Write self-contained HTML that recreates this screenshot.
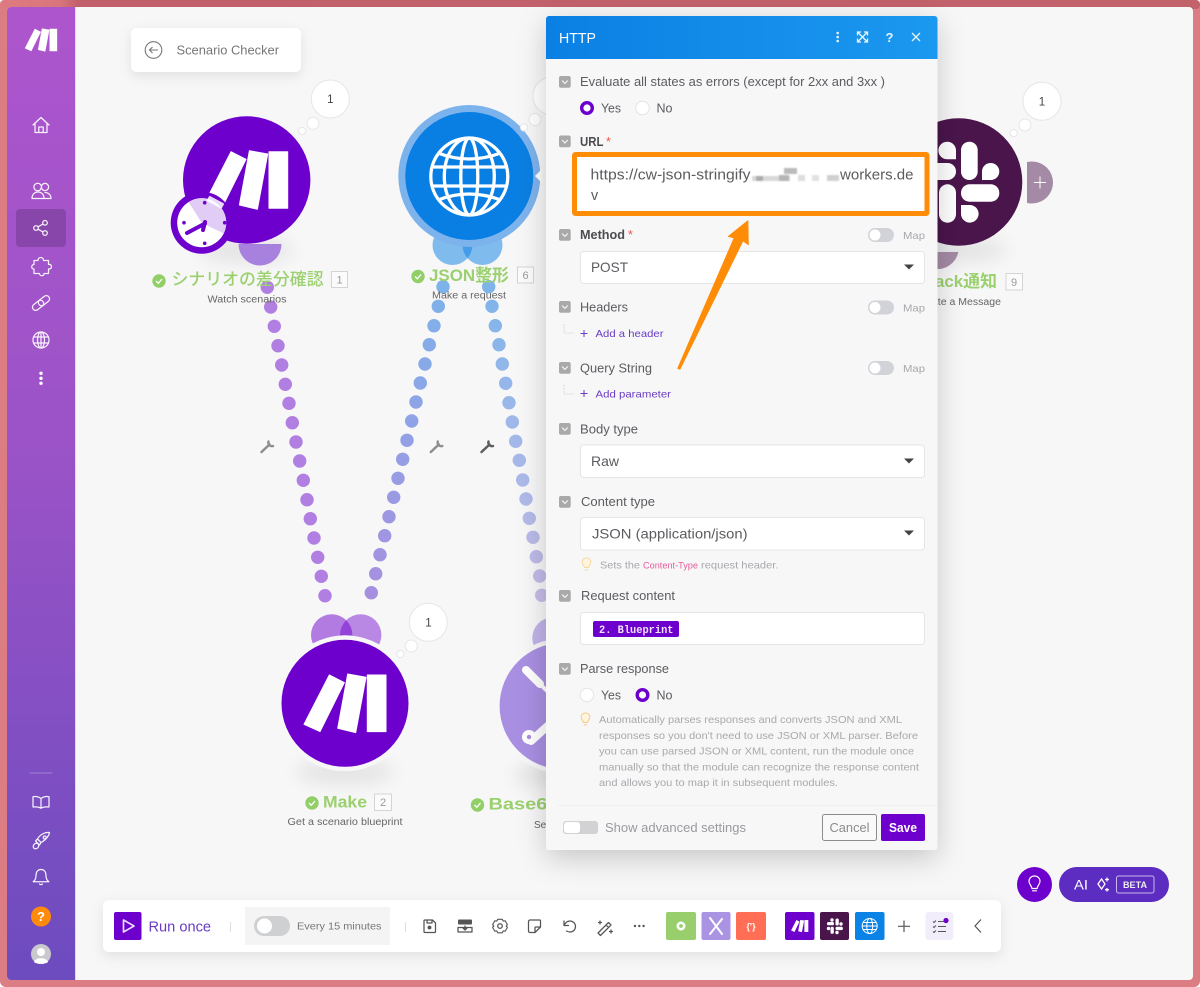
<!DOCTYPE html>
<html lang="en"><head><meta charset="utf-8"><title>HTTP - Scenario</title>
<style>
html,body{margin:0;padding:0;width:1200px;height:987px;overflow:hidden;background:#fff}
svg{display:block;filter:blur(.3px)}
text{font-family:"Liberation Sans","Noto Sans CJK JP",sans-serif;fill:#5c5c60}
.lb{font-size:12.5px}
.map{font-size:10.5px;fill:#a8a8ac}
.sel{font-size:14px;fill:#5c5c60}
.add{font-size:10.5px;fill:#6a3cc4}
.hint{font-size:10.3px;fill:#a9a9ad}
.g{font-size:16.8px;font-weight:700;fill:#9bd06f}
.gj{font-size:16.8px;font-weight:500;fill:#9bd06f}
.n{font-size:11px;fill:#9a9a9a}
.s{font-size:10px;fill:#666}
.ic{fill:none;stroke:#fff;stroke-width:1.25;stroke-linecap:round;stroke-linejoin:round;opacity:.92}
.tb{fill:none;stroke:#555;stroke-width:1.25;stroke-linecap:round;stroke-linejoin:round}
</style></head><body>
<svg xmlns="http://www.w3.org/2000/svg" width="1200" height="987" viewBox="0 0 1200 987">
<defs>
<linearGradient id="top" x1="0" x2="1"><stop offset="0" stop-color="#dd7b80"/><stop offset=".05" stop-color="#d8767c"/><stop offset=".065" stop-color="#c1606a"/><stop offset="1" stop-color="#c2636c"/></linearGradient>
<linearGradient id="side" x1="0" x2="0" y1="0" y2="1"><stop offset="0" stop-color="#ad55cd"/><stop offset=".45" stop-color="#9b53c7"/><stop offset="1" stop-color="#6c4cbf"/></linearGradient>
<linearGradient id="head" x1="0" x2="1"><stop offset="0" stop-color="#0a80e4"/><stop offset="1" stop-color="#1b98ef"/></linearGradient>
<linearGradient id="d1" gradientUnits="userSpaceOnUse" x1="0" x2="0" y1="287" y2="593"><stop offset="0" stop-color="#7eb2ea"/><stop offset="1" stop-color="#a78fe0"/></linearGradient>
<linearGradient id="d2" gradientUnits="userSpaceOnUse" x1="0" x2="0" y1="287" y2="600"><stop offset="0" stop-color="#7eb4ea"/><stop offset="1" stop-color="#c8bce8"/></linearGradient>
<filter id="sh" x="-30%" y="-30%" width="160%" height="160%"><feDropShadow dx="0" dy="8" stdDeviation="14" flood-color="#000" flood-opacity=".2"/></filter>
<filter id="sh2" x="-30%" y="-50%" width="160%" height="220%"><feDropShadow dx="0" dy="4" stdDeviation="6" flood-color="#000" flood-opacity=".09"/></filter>
<filter id="bl" x="-50%" y="-100%" width="200%" height="300%"><feGaussianBlur stdDeviation="9"/></filter>
<filter id="b1" x="-10%" y="-50%" width="120%" height="200%"><feGaussianBlur stdDeviation=".9"/></filter>
<clipPath id="cv"><rect x="75" y="7" width="1118" height="973"/></clipPath>
<clipPath id="cu"><rect x="150" y="244" width="200" height="40"/></clipPath>
<clipPath id="cr"><rect x="1027" y="150" width="40" height="70"/></clipPath>
</defs>

<!-- frame -->
<rect width="1200" height="987" rx="6" fill="#dc7d83"/>
<rect x="0" y="0" width="1200" height="9" rx="4" fill="url(#top)"/>
<rect x="7" y="7" width="1186" height="973" rx="4" fill="#f7f7f8"/>
<path d="M11 7H75V980H11a4 4 0 0 1-4-4V11a4 4 0 0 1 4-4Z" fill="url(#side)"/>
<rect x="75" y="7" width="1" height="973" fill="#e6d4f7"/>

<!-- sidebar -->
<g fill="#fff" stroke="#fff" stroke-width="1" stroke-linejoin="round" transform="translate(41 40) scale(.39)"><polygon points="-15.700,-28.300 -0.700,-20.700 -25,28.300 -41,21"/><polygon points="2.700,-29.300 21,-26 10.700,29.300 -7.300,25"/><rect x="22.300" y="-28.300" width="18.700" height="56.600"/></g>
<rect x="16" y="209" width="50" height="38" rx="4" fill="#7f429f" opacity=".75"/>
<g class="ic">
<path d="M33 125 41 117.500 49 125M35 123.500V132.500H47V123.500M38.800 132.500V127H43.200V132.500"/>
<circle cx="37.700" cy="187" r="3.800"/><circle cx="45" cy="187" r="3.600"/><path d="M32 198.500c0-4 2.500-6.500 6-6.500s6 2.500 6 6.500ZM45 192.500c3.500 0 6 2.500 6 6H44.500"/>
<circle cx="45" cy="222.800" r="2.300"/><circle cx="36" cy="228" r="2.300"/><circle cx="45" cy="233" r="2.300"/><path d="M38 226.900 43 224M38 229.200 43 232"/>
<path d="M38 260.500c0-4 5.500-4 5.500 0h5v4c4-1 4 5 0 4.500v4.500h-4.500c.5 3-4.500 3-4.500 0H34v-4.500c-3 .5-3-4.500 0-4.500v-4Z"/>
<g transform="rotate(-38 41 303)"><rect x="31" y="299.800" width="12.500" height="6.400" rx="3.200"/><rect x="38.500" y="299.800" width="12.500" height="6.400" rx="3.200"/></g>
<circle cx="41" cy="340" r="8"/><ellipse cx="41" cy="340" rx="3.500" ry="8"/><path d="M33.500 337H48.500M33.500 343H48.500M41 332V348"/>
<path d="M30 773H52" stroke-width="1" opacity=".3"/>
<path d="M41 798.500C38.500 796.500 35 796.200 33 796.700V807C36 806.700 39 807 41 808.200 43 807 46 806.700 49 807V796.700C47 796.200 43.500 796.500 41 798.500ZM41 798.500V808.200"/>
<path d="M49.500 832.500c-4.500-.5-9.500 2-12 6.500l3.500 3.500c5-2.500 8-7 8.500-10ZM37.500 839l-2 2 4 4 1.500-2.500"/><circle cx="44.700" cy="837.500" r="1.500"/><ellipse cx="36" cy="846" rx="2.500" ry="3" transform="rotate(45 36 846)"/>
<path d="M41 869.500c-3.800 0-5 3-5 6 0 3-1 5-2.800 6.200H48.800C47 880.500 46 878.500 46 875.500c0-3-1.200-6-5-6ZM39.500 884c.7.8 2.300.8 3 0"/>
</g>
<g fill="#fff"><circle cx="41" cy="373.300" r="1.700"/><circle cx="41" cy="378.300" r="1.700"/><circle cx="41" cy="383.300" r="1.700"/></g>
<circle cx="41" cy="916.500" r="10" fill="#ff8a0c"/><text x="41" y="921" text-anchor="middle" style="font-size:13px;font-weight:700;fill:#fff">?</text>
<circle cx="41" cy="954" r="10" fill="#c9c9cd"/><circle cx="41" cy="952" r="4" fill="#fff"/><path d="M34 962c1-5 13-5 14 0-3 2.500-11 2.500-14 0Z" fill="#fff"/>

<!-- canvas -->
<g clip-path="url(#cv)">
<!-- scenario card -->
<rect x="131" y="28" width="170" height="44" rx="6" fill="#fff" filter="url(#sh2)"/>
<circle cx="153.500" cy="50" r="8.300" fill="none" stroke="#777" stroke-width="1.100"/><path d="M158 50H149.500M152.500 47 149.500 50 152.500 53" fill="none" stroke="#777" stroke-width="1.100"/>
<text x="176.500" y="54.500" lengthAdjust="spacingAndGlyphs" textLength="102.500" style="font-size:12.500px;fill:#777">Scenario Checker</text>

<!-- shadows -->
<g filter="url(#bl)" fill="#000" opacity=".08"><ellipse cx="246" cy="250" rx="48" ry="12"/><ellipse cx="345" cy="772" rx="50" ry="12"/><ellipse cx="562" cy="775" rx="50" ry="12"/><ellipse cx="958" cy="250" rx="50" ry="12"/></g>

<!-- connector lobes -->
<g clip-path="url(#cu)"><circle cx="260" cy="244" r="21.500" fill="#a880dd"/></g>
<circle cx="452.500" cy="245" r="20" fill="#0a7fe3" fill-opacity=".5"/><circle cx="482.500" cy="245" r="20" fill="#0a7fe3" fill-opacity=".5"/>
<circle cx="331.700" cy="635" r="20.700" fill="#6d00cc" fill-opacity=".5"/><circle cx="360.700" cy="635" r="20.700" fill="#6d00cc" fill-opacity=".45"/>
<circle cx="553" cy="638" r="20.700" fill="#b9a7e5" fill-opacity=".85"/>
<path d="M930 252H958.300C956 263 946 269.500 937 269 933 269 930 267 928 265Z" fill="#a48aa5"/>

<!-- dots -->
<g fill="#b17fe2">
<circle cx="267.300" cy="287.300" r="6.700"/><circle cx="270.700" cy="307" r="6.700"/><circle cx="274.300" cy="326.300" r="6.700"/><circle cx="278" cy="345.700" r="6.700"/><circle cx="281.700" cy="365" r="6.700"/><circle cx="285.300" cy="384.300" r="6.700"/><circle cx="289" cy="403.300" r="6.700"/><circle cx="292.300" cy="422.700" r="6.700"/><circle cx="296" cy="442" r="6.700"/><circle cx="299.700" cy="461" r="6.700"/><circle cx="303.300" cy="480.300" r="6.700"/><circle cx="307" cy="499.700" r="6.700"/><circle cx="310.300" cy="518.700" r="6.700"/><circle cx="314" cy="538" r="6.700"/><circle cx="317.700" cy="557.300" r="6.700"/><circle cx="321.300" cy="576.300" r="6.700"/><circle cx="325" cy="595.700" r="6.700"/>
</g>
<g fill="url(#d1)">
<circle cx="443" cy="286.700" r="6.700"/><circle cx="438.300" cy="306.300" r="6.700"/><circle cx="434" cy="325.700" r="6.700"/><circle cx="429.300" cy="344.700" r="6.700"/><circle cx="425" cy="364" r="6.700"/><circle cx="420.300" cy="383" r="6.700"/><circle cx="416" cy="402" r="6.700"/><circle cx="411.700" cy="421" r="6.700"/><circle cx="407" cy="440.300" r="6.700"/><circle cx="402.700" cy="459.300" r="6.700"/><circle cx="398" cy="478.300" r="6.700"/><circle cx="393.700" cy="497.300" r="6.700"/><circle cx="389" cy="516.700" r="6.700"/><circle cx="384.700" cy="535.700" r="6.700"/><circle cx="380" cy="554.700" r="6.700"/><circle cx="375.700" cy="573.700" r="6.700"/><circle cx="371.300" cy="592.700" r="6.700"/>
</g>
<g fill="url(#d2)">
<circle cx="488.700" cy="286.700" r="6.700"/><circle cx="492" cy="306.300" r="6.700"/><circle cx="495.300" cy="325.700" r="6.700"/><circle cx="499" cy="344.700" r="6.700"/><circle cx="502.300" cy="364" r="6.700"/><circle cx="505.700" cy="383.300" r="6.700"/><circle cx="509" cy="402.700" r="6.700"/><circle cx="512.300" cy="422" r="6.700"/><circle cx="515.700" cy="441.300" r="6.700"/><circle cx="519.300" cy="460.300" r="6.700"/><circle cx="522.700" cy="480" r="6.700"/><circle cx="526" cy="499" r="6.700"/><circle cx="529.300" cy="518.300" r="6.700"/><circle cx="533" cy="537.300" r="6.700"/><circle cx="536.300" cy="556.700" r="6.700"/><circle cx="539.700" cy="576" r="6.700"/><circle cx="541.700" cy="595.300" r="6.700"/>
</g>
<!-- wrenches -->
<g fill="none" stroke-linecap="round">
<g stroke="#8e8e8e"><path d="M261.500 452 269.500 444.500" stroke-width="2.500"/><path d="M268.500 441.500A3.600 3.600 0 0 0 273 446" stroke-width="2.400"/></g>
<g stroke="#8e8e8e" transform="translate(169.300 0)"><path d="M261.500 452 269.500 444.500" stroke-width="2.500"/><path d="M268.500 441.500A3.600 3.600 0 0 0 273 446" stroke-width="2.400"/></g>
<g stroke="#5e5e5e" transform="translate(220 0)"><path d="M261.500 452 269.500 444.500" stroke-width="2.500"/><path d="M268.500 441.500A3.600 3.600 0 0 0 273 446" stroke-width="2.400"/></g>
</g>

<!-- modules -->
<circle cx="246.700" cy="180" r="63.700" fill="#6d00cc"/>
<g fill="#fff" stroke="#fff" stroke-width="1" stroke-linejoin="round" transform="translate(246.700 180)"><polygon points="-15.700,-28.300 -0.700,-20.700 -25,28.300 -41,21"/><polygon points="2.700,-29.300 21,-26 10.700,29.300 -7.300,25"/><rect x="22.300" y="-28.300" width="18.700" height="56.600"/></g>
<circle cx="201.700" cy="222.700" r="31" fill="#6d00cc"/>
<circle cx="201.700" cy="222.700" r="24.500" fill="#fff"/>
<path d="M201.700 222.700 188.500 202A24.500 24.500 0 0 1 223.700 233.500Z" fill="#e0ccf5"/>
<rect x="207" y="199" width="17" height="6" rx="1" fill="#fff" opacity=".85" transform="rotate(28 215 202)"/>
<g fill="#6d00cc"><circle cx="204.700" cy="202.700" r="1.800"/><circle cx="224.700" cy="222.700" r="1.800"/><circle cx="204.700" cy="243.300" r="1.800"/><circle cx="184" cy="222.700" r="1.800"/></g>
<path d="M187 233 205 223.500M205 222 203 230" stroke="#6d00cc" stroke-width="4" stroke-linecap="round" fill="none"/>

<circle cx="469.300" cy="176" r="71" fill="#7db3ec"/>
<circle cx="469.300" cy="176" r="64" fill="#0a7fe3"/>
<g fill="none" stroke="#fff" stroke-width="3.300"><circle cx="469.300" cy="176.500" r="38.500"/><ellipse cx="469.300" cy="176.500" rx="8.500" ry="38.500"/><ellipse cx="469.300" cy="176.500" rx="25" ry="38.500"/><path d="M431 167H508M431 186H508M438 153Q469 165 500.600 153M438 200Q469 188 500.600 200"/></g>
<path d="M535 176 541 170V182Z" fill="#fff"/>

<circle cx="345" cy="703.300" r="68" fill="#f7f7f8"/>
<circle cx="345" cy="703.300" r="63.500" fill="#6d00cc"/>
<g fill="#fff" stroke="#fff" stroke-width="1" stroke-linejoin="round" transform="translate(345 703.300)"><polygon points="-15.700,-28.300 -0.700,-20.700 -25,28.300 -41,21"/><polygon points="2.700,-29.300 21,-26 10.700,29.300 -7.300,25"/><rect x="22.300" y="-28.300" width="18.700" height="56.600"/></g>

<circle cx="562.600" cy="706" r="67.500" fill="#f7f7f8"/>
<circle cx="562.600" cy="706" r="63" fill="#a98fe2"/>
<path d="M526 670 540 684" stroke="#fff" stroke-width="8" stroke-linecap="round"/><path d="M538 682 548 692" stroke="#fff" stroke-width="4"/><path d="M531 741 552 722" stroke="#fff" stroke-width="8" stroke-linecap="round"/><circle cx="529" cy="737" r="7" fill="#fff"/><circle cx="529" cy="737" r="2.200" fill="#a98fe2"/>

<circle cx="1032" cy="182.500" r="21" fill="#a48aa5" clip-path="url(#cr)"/><path d="M1034 182.500H1046M1040 176.500V188.500" stroke="#fff" stroke-width="1"/>
<circle cx="958.600" cy="182" r="63.700" fill="#4a154b"/>
<g fill="#fff">
<rect x="961" y="141.700" width="16.700" height="38.300" rx="8.300"/>
<path d="M982 180V171.600a8.500 8.500 0 1 1 17.300 0 8.500 8.500 0 0 1-8.600 8.400Z"/>
<rect x="961" y="184.300" width="38.300" height="17.400" rx="8.500"/>
<path d="M961 205H969.500a8.800 8.800 0 1 1-8.500 8.800Z"/>
<rect x="939" y="184.300" width="17" height="38.400" rx="8.400"/>
<rect x="918" y="163" width="38" height="17" rx="8.400"/>
<path d="M956 159.300H947.500a8.800 8.800 0 1 1 8.500-8.800Z"/>
</g>

<!-- bubbles -->
<g fill="#fff" stroke="#e6e6e8" stroke-width="1">
<circle cx="330.300" cy="99" r="19"/><circle cx="313" cy="123.300" r="6"/><circle cx="302" cy="131" r="3.600"/>
<circle cx="428.300" cy="622.300" r="19"/><circle cx="411.300" cy="646" r="6"/><circle cx="400.300" cy="654" r="3.600"/>
<circle cx="1042" cy="101.300" r="19"/><circle cx="1025" cy="125" r="6"/><circle cx="1013.700" cy="133" r="3.600"/>
<circle cx="552" cy="96" r="19"/><circle cx="535" cy="119.500" r="6"/><circle cx="524" cy="127.500" r="3.600"/>
</g>
<g text-anchor="middle"><text x="330.300" y="103" style="font-size:11.500px;fill:#444">1</text><text x="428.500" y="626.500" style="font-size:11.500px;fill:#444">1</text><text x="1042" y="105.500" style="font-size:11.500px;fill:#444">1</text></g>

<!-- labels -->
<g fill="#93cf68"><circle cx="159" cy="281" r="6.700"/><circle cx="418" cy="276.500" r="6.700"/><circle cx="312" cy="803" r="6.700"/><circle cx="477.500" cy="805" r="6.700"/></g>
<g fill="none" stroke="#fff" stroke-width="1.300"><path d="M156 281 158.300 283.300 162 279"/><path d="M415 276.500 417.300 278.800 421 274.500"/><path d="M309 803 311.300 805.300 315 801"/><path d="M474.500 805 476.800 807.300 480.500 803"/></g>
<text class="gj" x="171.500" y="285" lengthAdjust="spacingAndGlyphs" textLength="152">シナリオの差分確認</text>
<text class="g" x="429" y="281" lengthAdjust="spacingAndGlyphs" textLength="80">JSON整形</text>
<text class="g" x="323" y="807.500" lengthAdjust="spacingAndGlyphs" textLength="44">Make</text>
<text class="g" x="488.500" y="809.500" lengthAdjust="spacingAndGlyphs" textLength="70">Base64</text>
<text class="g" x="919" y="287" lengthAdjust="spacingAndGlyphs" textLength="78">Slack通知</text>
<g fill="#fbfbfb" stroke="#d4d4d6"><rect x="331.500" y="271.500" width="16" height="16"/><rect x="517.500" y="267" width="16" height="16"/><rect x="374.500" y="794" width="17" height="16.500"/><rect x="1006" y="273.500" width="16.500" height="16.500"/></g>
<text class="n" x="339.500" y="283.500" text-anchor="middle">1</text><text class="n" x="525.500" y="279" text-anchor="middle">6</text><text class="n" x="383" y="806" text-anchor="middle">2</text><text class="n" x="1014" y="286" text-anchor="middle">9</text>
<text class="s" x="247" y="302.500" text-anchor="middle" lengthAdjust="spacingAndGlyphs" textLength="79">Watch scenarios</text>
<text class="s" x="469" y="298.500" text-anchor="middle" lengthAdjust="spacingAndGlyphs" textLength="74">Make a request</text>
<text class="s" x="345" y="825" text-anchor="middle" lengthAdjust="spacingAndGlyphs" textLength="115">Get a scenario blueprint</text>
<text class="s" x="534" y="828">Se</text>
<text class="s" x="915" y="305" lengthAdjust="spacingAndGlyphs" textLength="86">Create a Message</text>
</g>

<!-- toolbar -->
<rect x="103" y="900" width="898" height="52" rx="6" fill="#fff" filter="url(#sh2)"/>
<rect x="114" y="912" width="27.500" height="28" rx="2" fill="#6d00cc"/>
<path d="M123.500 920V932L134 926Z" fill="none" stroke="#e9dcf9" stroke-width="1.700" stroke-linejoin="round"/>
<text x="148.500" y="931.500" lengthAdjust="spacingAndGlyphs" textLength="62.500" style="font-size:14.500px;fill:#6c3cc4">Run once</text>
<path d="M230.500 922V932M405.500 922V932" stroke="#dedee0" stroke-width="1"/>
<rect x="245" y="907" width="145" height="38" fill="#f4f4f5"/>
<rect x="254" y="916" width="36" height="20" rx="10" fill="#cfd0d2"/><circle cx="264.500" cy="926" r="7.500" fill="#fff"/>
<text x="297" y="929.500" lengthAdjust="spacingAndGlyphs" textLength="84.500" style="font-size:10.500px;fill:#777">Every 15 minutes</text>
<g class="tb">
<path d="M425 920h7.500l3 3v8.500a1 1 0 0 1-1 1h-9.500a1 1 0 0 1-1-1v-10.500a1 1 0 0 1 1-1ZM427 920v3h5v-3"/><circle cx="429.500" cy="927.500" r="1.300" fill="#555"/>
<path d="M458 927.500h14v4.500h-14ZM465 930v-4M463 928l2 2 2-2"/>
<circle cx="500" cy="926" r="2.300"/><path d="M497.500 919.500h5l1 2 2.300-.2 2.400 4.200-1.300 1.500 1.300 1.500-2.400 4.200-2.300-.2-1 2h-5l-1-2-2.300.2-2.400-4.200 1.300-1.500-1.300-1.500 2.400-4.200 2.300.2Z" transform="translate(50 91.700) scale(.9)"/>
<path d="M530 920h9.500a1 1 0 0 1 1 1v6l-5.500 5.500h-5a1.500 1.500 0 0 1-1.500-1.500v-9.500a1.500 1.500 0 0 1 1.500-1.500ZM540.500 927h-4.500a1 1 0 0 0-1 1v4.500"/>
<path d="M564 921v4.500h4.500M564 925.500c1.500-3 3.500-4.500 6-4.500a5.500 5.500 0 1 1 0 11c-1.500 0-2.500-.5-3.500-1"/>
<path d="M598 933l10.500-10.500 2.500 2.500-10.500 10.500ZM606 925l2.500 2.500M600 921v3M598.500 922.500h3M611 930v3M609.500 931.500h3"/>
</g>
<rect x="458" y="919.500" width="14" height="5" rx="1" fill="#555"/>
<g fill="#555"><circle cx="635" cy="926" r="1.200"/><circle cx="639.300" cy="926" r="1.200"/><circle cx="643.600" cy="926" r="1.200"/></g>
<rect x="666" y="912" width="30" height="28" rx="2" fill="#98ce6b"/><circle cx="681" cy="926" r="3.200" fill="none" stroke="#fff" stroke-width="2.600"/>
<rect x="701.500" y="912" width="29" height="28" rx="2" fill="#aa93e3"/><path d="M710 918 722 934M722 919 710 934" stroke="#fff" stroke-width="2" stroke-linecap="round"/>
<rect x="736" y="912" width="30" height="28" rx="2" fill="#ff6e55"/><text x="751" y="929.500" text-anchor="middle" style="font-size:9px;font-weight:700;fill:#fff">{'}</text>
<rect x="785" y="912" width="29.500" height="28" rx="2" fill="#6d00cc"/>
<g fill="#fff" transform="translate(799.700 926) scale(.21)"><polygon points="-15.700,-28.300 -0.700,-20.700 -25,28.300 -41,21"/><polygon points="2.700,-29.300 21,-26 10.700,29.300 -7.300,25"/><rect x="22.300" y="-28.300" width="18.700" height="56.600"/></g>
<rect x="820" y="912" width="29" height="28" rx="2" fill="#4a154b"/>
<g fill="#fff"><rect x="835.500" y="918.500" width="3.300" height="7" rx="1.600"/><rect x="835.500" y="926.800" width="7.400" height="3.300" rx="1.600"/><rect x="827" y="922" width="7" height="3.300" rx="1.600"/><rect x="830.500" y="926.800" width="3.300" height="7" rx="1.600"/><circle cx="832" cy="920" r="1.700"/><circle cx="841" cy="924" r="1.700"/><circle cx="837" cy="932.500" r="1.700"/><circle cx="828.500" cy="928.500" r="1.700"/></g>
<rect x="855" y="912" width="29.500" height="28" rx="2" fill="#0a82e6"/>
<g fill="none" stroke="#fff" stroke-width="1"><circle cx="869.700" cy="926" r="7.500"/><ellipse cx="869.700" cy="926" rx="3" ry="7.500"/><path d="M862.500 926H877M863.500 922.500H876M863.500 929.500H876"/></g>
<path d="M904 920.500V932M898 926.300H910" stroke="#555" stroke-width="1.200"/>
<rect x="925.500" y="912" width="27.800" height="28" rx="3" fill="#f2edfb"/>
<path d="M938 921.500H945M938 926.500H946M938 931.500H946M933 921.500l1 1 2-2M933 926.500l1 1 2-2M933 931.500l1 1 2-2" fill="none" stroke="#555" stroke-width="1"/><circle cx="946" cy="920.500" r="2.600" fill="#6d00cc"/>
<path d="M981 919.500 975 926 981 932.500" fill="none" stroke="#555" stroke-width="1.200"/>

<!-- AI -->
<circle cx="1034.500" cy="884.500" r="17.500" fill="#6d00cc"/>
<path d="M1034.500 876c-3.500 0-5.500 2.600-5.500 5.300 0 3 2.500 4.200 3 7.200h5c.5-3 3-4.200 3-7.200 0-2.700-2-5.300-5.500-5.300ZM1032.500 890.800h4" fill="none" stroke="#fff" stroke-width="1.200" stroke-linecap="round"/>
<rect x="1059" y="867" width="110" height="35" rx="17.500" fill="#5c2dc0"/>
<text x="1074" y="889.500" lengthAdjust="spacingAndGlyphs" textLength="14" style="font-size:14px;fill:#fff">AI</text>
<path d="M1101.500 879l3.500 5-3.500 5-3.500-5ZM1107 877.500v4M1105 879.500h4M1107 888v3.500M1105 889.700h4" fill="none" stroke="#fff" stroke-width="1.300"/>
<rect x="1116.500" y="876" width="37.500" height="17" rx="2" fill="none" stroke="#c9b8ee" stroke-width="1"/>
<text x="1135" y="888" text-anchor="middle" lengthAdjust="spacingAndGlyphs" textLength="24" style="font-size:9px;font-weight:700;fill:#eee">BETA</text>

<!-- HTTP panel -->
<rect x="546" y="16" width="391.500" height="834" rx="3" fill="#f7f7f8" filter="url(#sh)"/>
<path d="M549 16H934.500a3 3 0 0 1 3 3V59H546V19a3 3 0 0 1 3-3Z" fill="url(#head)"/>
<text x="559" y="43" lengthAdjust="spacingAndGlyphs" textLength="37" style="font-size:15px;fill:#fff">HTTP</text>
<g fill="#e8f3fd"><circle cx="837.700" cy="33" r="1.300"/><circle cx="837.700" cy="37" r="1.300"/><circle cx="837.700" cy="41" r="1.300"/></g>
<g fill="none" stroke="#e8f3fd" stroke-width="1.300"><path d="M858 32.500 867 41.500M867 32.500 858 41.500M857.500 35.500V32H861M864 32H867.500V35.500M857.500 38.500V42H861M864 42H867.500V38.500"/><path d="M912 33 920 41M920 33 912 41"/></g>
<text x="889.500" y="42" text-anchor="middle" style="font-size:13px;font-weight:700;fill:#e8f3fd">?</text>

<!-- collapse icons -->
<g fill="#a9a9a9">
<rect x="559" y="76" width="11.700" height="11.700" rx="2"/><rect x="559" y="135.500" width="11.700" height="11.700" rx="2"/><rect x="559" y="229" width="11.700" height="11.700" rx="2"/><rect x="559" y="301" width="11.700" height="11.700" rx="2"/><rect x="559" y="362" width="11.700" height="11.700" rx="2"/><rect x="559" y="423" width="11.700" height="11.700" rx="2"/><rect x="559" y="496" width="11.700" height="11.700" rx="2"/><rect x="559" y="590" width="11.700" height="11.700" rx="2"/><rect x="559" y="663" width="11.700" height="11.700" rx="2"/>
</g>
<g fill="none" stroke="#f5f5f5" stroke-width="1.200"><path d="M562 80.500l2.900 2.900 2.900-2.900M562 140l2.900 2.900 2.900-2.900M562 233.500l2.900 2.900 2.900-2.900M562 305.500l2.900 2.900 2.900-2.900M562 366.500l2.900 2.900 2.900-2.900M562 427.500l2.900 2.900 2.900-2.900M562 500.500l2.900 2.900 2.900-2.900M562 594.500l2.900 2.900 2.900-2.900M562 667.500l2.900 2.900 2.900-2.900"/></g>

<text class="lb" x="580" y="86" lengthAdjust="spacingAndGlyphs" textLength="305">Evaluate all states as errors (except for 2xx and 3xx )</text>
<circle cx="587" cy="108" r="5.300" fill="#fff" stroke="#6d00cc" stroke-width="3.400"/>
<text class="lb" x="601" y="112.500" lengthAdjust="spacingAndGlyphs" textLength="20">Yes</text>
<circle cx="642.500" cy="108" r="6.700" fill="#fff" stroke="#e4e4e6"/>
<text class="lb" x="656.500" y="112.500" lengthAdjust="spacingAndGlyphs" textLength="16">No</text>

<text x="580" y="146" lengthAdjust="spacingAndGlyphs" textLength="23.500" style="font-size:12.500px;font-weight:700;fill:#4c4c50">URL</text><text x="606" y="146" style="font-size:12.500px;fill:#f05a46">*</text>
<rect x="574.500" y="154.500" width="352.500" height="59" rx="1" fill="#fff" stroke="#ff8c06" stroke-width="5"/>
<text x="590.500" y="179.500" lengthAdjust="spacingAndGlyphs" textLength="160" style="font-size:14.300px">https://cw-json-stringify</text>
<g filter="url(#b1)"><rect x="752" y="176" width="38" height="5" fill="#d8d8d8"/><rect x="756" y="176" width="7" height="5" fill="#aaa"/><rect x="779" y="175" width="10" height="6" fill="#b5b5b5"/><rect x="784" y="168" width="13" height="6" fill="#bbb"/><rect x="798" y="175" width="7" height="6" fill="#ddd"/><rect x="812" y="175" width="7" height="6" fill="#e2e2e2"/><rect x="827" y="175" width="12" height="6" fill="#d0d0d0"/></g>
<text x="840" y="179.500" lengthAdjust="spacingAndGlyphs" textLength="73.500" style="font-size:14.300px">workers.de</text>
<text x="591" y="200" style="font-size:14.300px">v</text>

<text x="580" y="239" lengthAdjust="spacingAndGlyphs" textLength="45" style="font-size:12.500px;font-weight:700;fill:#4c4c50">Method</text><text x="628" y="239" style="font-size:12.500px;fill:#f05a46">*</text>
<text class="lb" x="580" y="311.500" lengthAdjust="spacingAndGlyphs" textLength="48">Headers</text>
<text class="lb" x="580" y="372.500" lengthAdjust="spacingAndGlyphs" textLength="72">Query String</text>
<text class="lb" x="580" y="433.500" lengthAdjust="spacingAndGlyphs" textLength="58">Body type</text>
<text class="lb" x="581" y="506" lengthAdjust="spacingAndGlyphs" textLength="74">Content type</text>
<text class="lb" x="581" y="600" lengthAdjust="spacingAndGlyphs" textLength="94">Request content</text>
<text class="lb" x="580" y="673" lengthAdjust="spacingAndGlyphs" textLength="89">Parse response</text>

<!-- map toggles -->
<g fill="#d2d3d8"><rect x="868" y="228" width="26" height="14" rx="7"/><rect x="868" y="300.500" width="26" height="14" rx="7"/><rect x="868" y="361" width="26" height="14" rx="7"/></g>
<g fill="#fff"><circle cx="875" cy="235" r="5.500"/><circle cx="875" cy="307.500" r="5.500"/><circle cx="875" cy="368" r="5.500"/></g>
<text class="map" x="903" y="239" lengthAdjust="spacingAndGlyphs" textLength="22">Map</text><text class="map" x="903" y="311.500" lengthAdjust="spacingAndGlyphs" textLength="22">Map</text><text class="map" x="903" y="372" lengthAdjust="spacingAndGlyphs" textLength="22">Map</text>

<!-- selects -->
<g fill="#fff" stroke="#e5e5e8"><rect x="580.500" y="251.500" width="344" height="32" rx="3"/><rect x="580.500" y="445" width="344" height="32.500" rx="3"/><rect x="580.500" y="517.500" width="344" height="32.500" rx="3"/><rect x="580.500" y="612.500" width="344" height="32" rx="3"/></g>
<text class="sel" x="591" y="272" lengthAdjust="spacingAndGlyphs" textLength="37">POST</text>
<text class="sel" x="591" y="466" lengthAdjust="spacingAndGlyphs" textLength="28">Raw</text>
<text class="sel" x="592" y="538.500" lengthAdjust="spacingAndGlyphs" textLength="155.500">JSON (application/json)</text>
<g fill="#444"><path d="M904 264.500h10l-5 5Z"/><path d="M904 458.500h10l-5 5Z"/><path d="M904 530.500h10l-5 5Z"/></g>

<!-- add -->
<path d="M564 324V333H574M564 385V394H574" fill="none" stroke="#d8d8da" stroke-width="1" stroke-dasharray="2 1"/>
<g stroke="#6a3cc4" stroke-width="1"><path d="M580.500 333.500h7M584 330v7M580.500 393.500h7M584 390v7"/></g>
<text class="add" x="595.500" y="337" lengthAdjust="spacingAndGlyphs" textLength="68">Add a header</text>
<text class="add" x="595.500" y="397.500" lengthAdjust="spacingAndGlyphs" textLength="75.500">Add parameter</text>

<!-- hint -->
<path d="M586.500 558c-2.800 0-4.300 2-4.300 4.100 0 2.300 1.900 3.200 2.300 5.400h4c.4-2.200 2.300-3.100 2.300-5.400 0-2.100-1.500-4.100-4.300-4.100ZM584.800 570h3.400" fill="#fff5df" stroke="#f6d9a2" stroke-width="1"/>
<text class="hint" x="600" y="568.500" lengthAdjust="spacingAndGlyphs" textLength="40">Sets the</text>
<text x="643" y="568.500" lengthAdjust="spacingAndGlyphs" textLength="55" style="font-size:9.300px;fill:#e75c9b">Content-Type</text>
<text class="hint" x="701" y="568.500" lengthAdjust="spacingAndGlyphs" textLength="77.500">request header.</text>

<!-- tag -->
<rect x="593" y="621" width="86" height="16" rx="2" fill="#6d00cc"/>
<text x="599" y="633" lengthAdjust="spacingAndGlyphs" textLength="74.500" style="font-family:'Liberation Mono',monospace;font-size:11px;font-weight:700;fill:#efe4fb">2. Blueprint</text>

<circle cx="587" cy="695" r="6.700" fill="#fff" stroke="#e4e4e6"/>
<text class="lb" x="601" y="699.500" lengthAdjust="spacingAndGlyphs" textLength="20">Yes</text>
<circle cx="642.500" cy="695" r="5.300" fill="#fff" stroke="#6d00cc" stroke-width="3.400"/>
<text class="lb" x="656.500" y="699.500" lengthAdjust="spacingAndGlyphs" textLength="16">No</text>

<path d="M585.500 713c-2.800 0-4.300 2-4.300 4.100 0 2.300 1.900 3.200 2.300 5.400h4c.4-2.200 2.300-3.100 2.300-5.400 0-2.100-1.500-4.100-4.300-4.100ZM583.800 725h3.400" fill="#fff5df" stroke="#f6c98a" stroke-width="1"/>
<text class="hint" x="599" y="723" lengthAdjust="spacingAndGlyphs" textLength="303">Automatically parses responses and converts JSON and XML</text>
<text class="hint" x="599" y="739" lengthAdjust="spacingAndGlyphs" textLength="319">responses so you don't need to use JSON or XML parser. Before</text>
<text class="hint" x="599" y="754.500" lengthAdjust="spacingAndGlyphs" textLength="315">you can use parsed JSON or XML content, run the module once</text>
<text class="hint" x="599" y="770.500" lengthAdjust="spacingAndGlyphs" textLength="320">manually so that the module can recognize the response content</text>
<text class="hint" x="599" y="786" lengthAdjust="spacingAndGlyphs" textLength="239">and allows you to map it in subsequent modules.</text>

<!-- footer -->
<path d="M558 805.500H937" stroke="#efeff1" stroke-width="1"/>
<rect x="563" y="821" width="35" height="13" rx="3" fill="#d2d2d4"/><rect x="564" y="822" width="16" height="11" rx="3" fill="#fff"/>
<text class="lb" x="605" y="832" lengthAdjust="spacingAndGlyphs" textLength="141" style="fill:#9a9a9e">Show advanced settings</text>
<rect x="822.500" y="814.500" width="54" height="26" rx="2" fill="#f9f9fa" stroke="#8c8c8c"/>
<text x="849.500" y="832" text-anchor="middle" lengthAdjust="spacingAndGlyphs" textLength="40" style="font-size:12.500px;fill:#8c8c8c">Cancel</text>
<rect x="881" y="814" width="44" height="27" rx="2" fill="#6d00cc"/>
<text x="903" y="832" text-anchor="middle" lengthAdjust="spacingAndGlyphs" textLength="28" style="font-size:12.500px;font-weight:700;fill:#fff">Save</text>

<!-- arrow -->
<path d="M677.500 368.500 734 238 728 236.500 748 220.500 748.500 245 743 241 680 369.500Z" fill="#ff8c06" stroke="#ff8c06" stroke-width=".6" stroke-linejoin="round"/>
</svg>
</body></html>
